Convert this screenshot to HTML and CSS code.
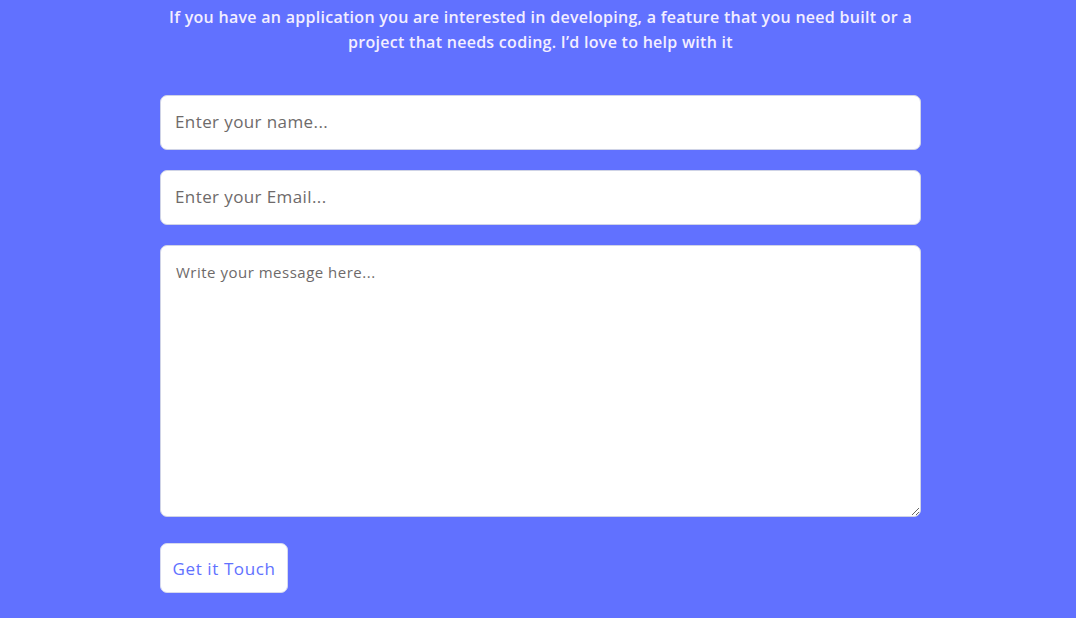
FILE: index.html
```html
<!DOCTYPE html>
<html>
<head>
<meta charset="utf-8">
<link rel="stylesheet" href="styles.css">
</head>
<body>
<section class="contact">
  <p class="intro">If you have an application you are interested in developing, a feature that you need built or a<br>project that needs coding. I’d love to help with it</p>
  <form class="form">
    <input class="field" type="text" placeholder="Enter your name...">
    <input class="field" type="email" placeholder="Enter your Email...">
    <textarea class="message" placeholder="Write your message here..."></textarea>
    <div class="actions"><button class="btn" type="button">Get it Touch</button></div>
  </form>
</section>
</body>
</html>
```
FILE: styles.css
```css
html, body {
  margin: 0;
  padding: 0;
  background: #6171ff;
  height: 100%;
}
body {
  font-family: "Open Sans", "DejaVu Sans", sans-serif;
  overflow: hidden;
}
.contact {
  width: 761px;
  margin-left: 160px;
  padding-top: 5px;
}
.intro {
  margin: 0;
  text-align: center;
  color: #f3eeff;
  font-size: 16px;
  font-weight: 600;
  line-height: 25px;
  letter-spacing: 0.28px;
  white-space: nowrap;
}
.form {
  margin-top: 40px;
  display: flex;
  flex-direction: column;
  gap: 20px;
}
.field, .message {
  box-sizing: border-box;
  width: 100%;
  border: 1px solid #cfd3e6;
  border-radius: 7px;
  background: #fff;
  font-family: inherit;
  outline: none;
}
.field {
  height: 55px;
  padding: 0 14px 3px;
  font-size: 17px;
  letter-spacing: 0.4px;
}
.message {
  height: 272px;
  padding: 16px 15px;
  font-size: 15px;
  letter-spacing: 0.5px;
  resize: vertical;
  display: block;
}
.field::placeholder, .message::placeholder {
  color: #6e6a6a;
}
.actions {
  margin-top: 6px;
  display: flex;
}
.btn {
  height: 50px;
  width: 128px;
  border: 1px solid #d6d9ee;
  border-radius: 7px;
  background: #fff;
  color: #6171ff;
  font-family: inherit;
  font-size: 17px;
  letter-spacing: 0.6px;
  cursor: pointer;
}
```
